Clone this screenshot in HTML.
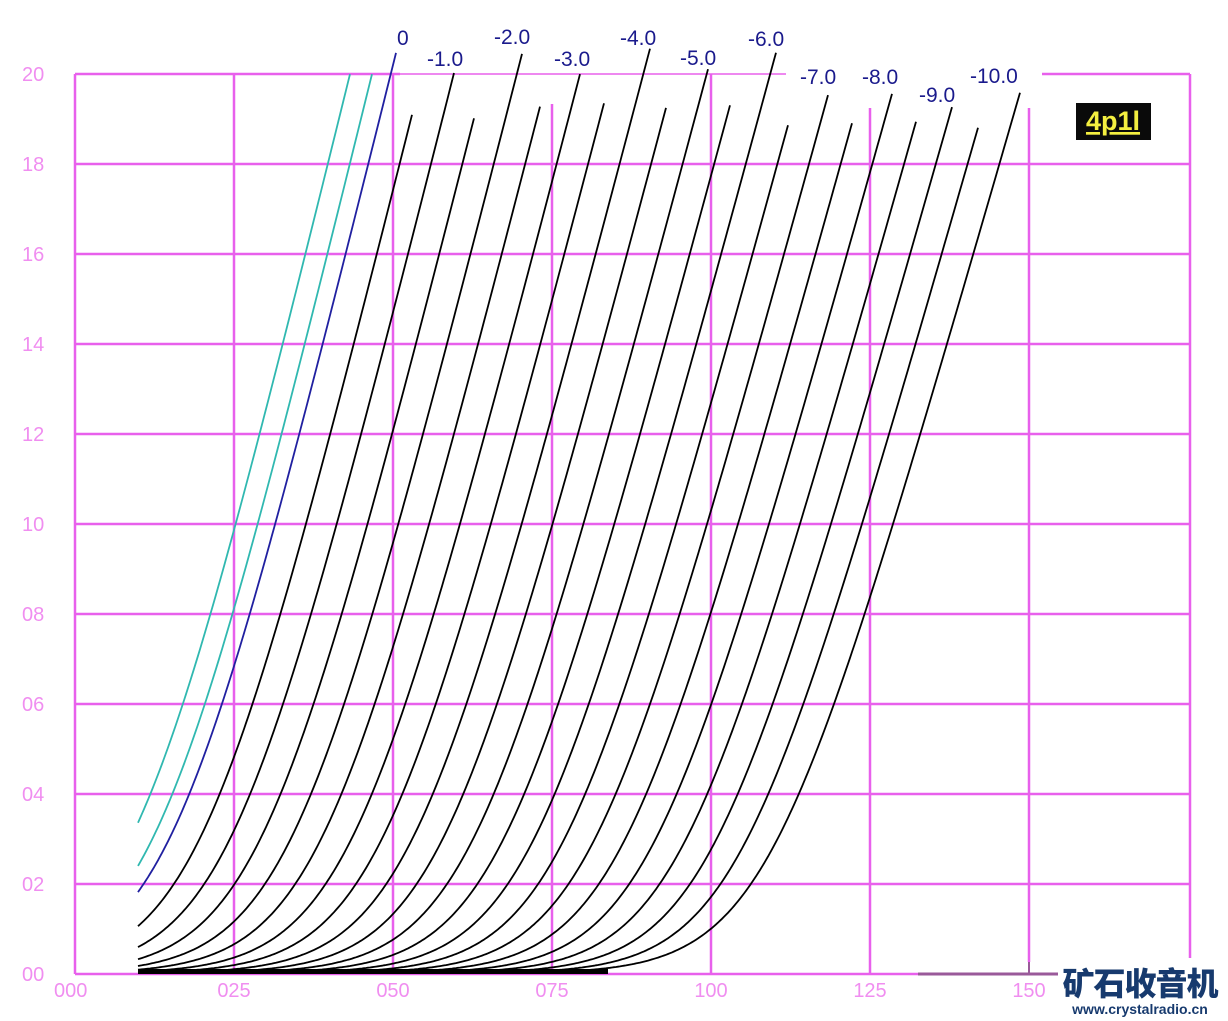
<!DOCTYPE html>
<html><head><meta charset="utf-8"><style>
html,body{margin:0;padding:0;background:#fff;width:1228px;height:1021px;overflow:hidden}
svg{display:block}
.ax{font-family:"Liberation Sans",sans-serif;font-size:20px;fill:#f08ef0}
.lb{font-family:"Liberation Sans",sans-serif;font-size:21px;fill:#1a1a8c}
</style></head><body>
<svg id="s" width="1228" height="1021" viewBox="0 0 1228 1021" xmlns="http://www.w3.org/2000/svg">
<g stroke="#e860ec" stroke-width="2.5" fill="none">
<line x1="75" y1="164" x2="1190" y2="164"/><line x1="75" y1="254" x2="1190" y2="254"/>
<line x1="75" y1="344" x2="1190" y2="344"/><line x1="75" y1="434" x2="1190" y2="434"/>
<line x1="75" y1="524" x2="1190" y2="524"/><line x1="75" y1="614" x2="1190" y2="614"/>
<line x1="75" y1="704" x2="1190" y2="704"/><line x1="75" y1="794" x2="1190" y2="794"/>
<line x1="75" y1="884" x2="1190" y2="884"/><line x1="75" y1="974" x2="918" y2="974"/>
<line x1="75" y1="74" x2="400" y2="74"/><line x1="400" y1="74" x2="786" y2="74" stroke-width="1.5"/>
<line x1="1040" y1="74" x2="1190" y2="74"/>
<line x1="75" y1="74" x2="75" y2="974"/><line x1="234" y1="74" x2="234" y2="974"/>
<line x1="393" y1="74" x2="393" y2="974"/><line x1="552" y1="104" x2="552" y2="974"/>
<line x1="711" y1="74" x2="711" y2="974"/><line x1="870" y1="108" x2="870" y2="974"/>
<line x1="1029" y1="108" x2="1029" y2="962"/><line x1="1190" y1="74" x2="1190" y2="974"/>
</g>
<line x1="918" y1="974" x2="1060" y2="974" stroke="#9a5a9a" stroke-width="3"/>
<line x1="1029" y1="962" x2="1029" y2="974" stroke="#9a5a9a" stroke-width="2"/>
<g id="curves" fill="none" stroke-width="1.8"></g>
<rect x="138" y="969" width="470" height="5" fill="#000"/>
<g class="ax">
<text x="22" y="81">20</text><text x="22" y="171">18</text><text x="22" y="261">16</text>
<text x="22" y="351">14</text><text x="22" y="441">12</text><text x="22" y="531">10</text>
<text x="22" y="621">08</text><text x="22" y="711">06</text><text x="22" y="801">04</text>
<text x="22" y="891">02</text><text x="22" y="981">00</text>
<text x="54" y="997">000</text>
<text x="234" y="997" text-anchor="middle">025</text><text x="393" y="997" text-anchor="middle">050</text>
<text x="552" y="997" text-anchor="middle">075</text><text x="711" y="997" text-anchor="middle">100</text>
<text x="870" y="997" text-anchor="middle">125</text><text x="1029" y="997" text-anchor="middle">150</text>
<text x="1190" y="997" text-anchor="middle">175</text>
</g>
<g class="lb">
<text x="397" y="45">0</text>
<rect x="425" y="48" width="62" height="22" fill="#fff"/><text x="427" y="66">-1.0</text>
<rect x="492" y="26" width="62" height="22" fill="#fff"/><text x="494" y="44">-2.0</text>
<rect x="552" y="46" width="62" height="22" fill="#fff"/><text x="554" y="66">-3.0</text>
<rect x="618" y="26" width="62" height="22" fill="#fff"/><text x="620" y="45">-4.0</text>
<rect x="679" y="46" width="62" height="22" fill="#fff"/><text x="680" y="65">-5.0</text>
<rect x="746" y="26" width="62" height="22" fill="#fff"/><text x="748" y="46">-6.0</text>
<rect x="798" y="66" width="60" height="22" fill="#fff"/><text x="800" y="84">-7.0</text>
<rect x="861" y="66" width="60" height="22" fill="#fff"/><text x="862" y="84">-8.0</text>
<rect x="918" y="84" width="60" height="22" fill="#fff"/><text x="919" y="102">-9.0</text>
<rect x="970" y="64" width="72" height="22" fill="#fff"/><text x="970" y="83">-10.0</text>
</g>
<rect x="1076" y="103" width="75" height="37" fill="#0a0a0a"/>
<text x="1113" y="130" text-anchor="middle" font-family="Liberation Sans,sans-serif" font-weight="bold" font-size="27" fill="#f4ef40" text-decoration="underline">4p1l</text>
<rect x="1058" y="958" width="168" height="62" fill="#fff"/>
<text x="1140" y="995" text-anchor="middle" font-family="'Liberation Sans','Noto Sans CJK SC',sans-serif" font-weight="900" font-size="32" fill="#173a6e" letter-spacing="-1">矿石收音机</text>
<text x="1140" y="1014" text-anchor="middle" font-family="Liberation Sans,sans-serif" font-weight="bold" font-size="14" fill="#173a6e">www.crystalradio.cn</text>
</svg>
<script>
(function(){
var g=document.getElementById('curves');
var ends={0:50,1:112,2:68,3:112,4:48,5:104,6:68,7:103,8:48,9:105,10:68,11:103,12:48,13:118,14:88,15:122,16:88,17:118,18:106,19:122,20:92};
var list=[];
list.push({c:131,s:4.1,e:72,col:'#30b8b0'});
list.push({c:153,s:4.1,e:72,col:'#30b8b0'});
for(var k=0;k<=20;k++){
 list.push({c:169+29.9*k,s:4.05-(0.57*k/20),e:ends[k],col:k==0?'#2020a0':'#000'});
}
var w=48;
list.forEach(function(o){
 var pts=[];
 for(var x=138;x<1200;x+=2){
  var u=x-o.c; var h=o.s*w*Math.log(1+Math.exp(u/w));
  var y=974-h;
  if(y<o.e){break;}
  if(y>972)y=972;
  pts.push(x+','+y.toFixed(1));
 }
 var p=document.createElementNS('http://www.w3.org/2000/svg','polyline');
 p.setAttribute('points',pts.join(' '));p.setAttribute('stroke',o.col);
 g.appendChild(p);
});
})();
</script>
</body></html>
